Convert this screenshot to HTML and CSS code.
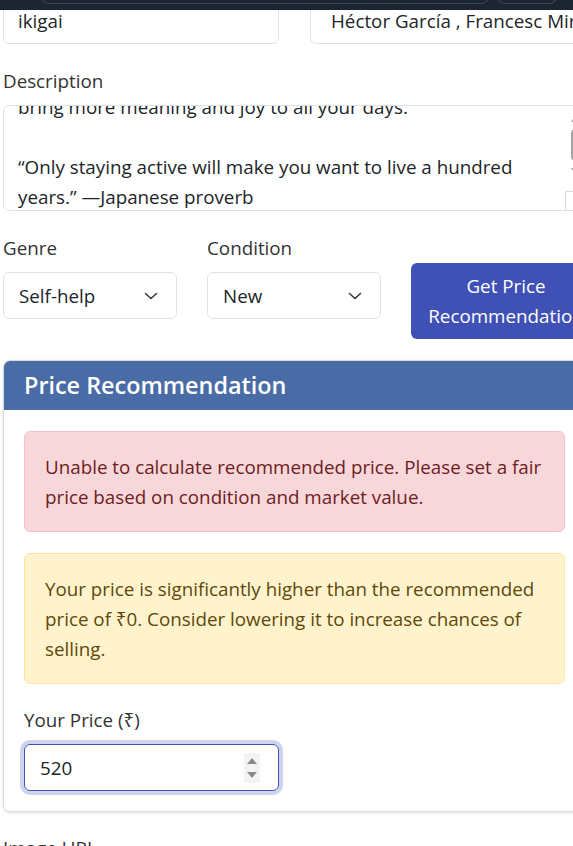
FILE: index.html
```html
<!DOCTYPE html>
<html lang="en">
<head>
<meta charset="utf-8">
<title>Sell Book</title>
<link rel="stylesheet" href="styles.css">
</head>
<body>
<header class="topbar">
  <div class="topbar-search"></div>
  <div class="topbar-btn"></div>
</header>
<main class="page">
  <div class="row-two">
    <div class="group">
      <div class="control">ikigai</div>
    </div>
    <div class="group">
      <div class="control control-wide">Héctor García , Francesc Miralles</div>
    </div>
  </div>

  <div class="group">
    <label class="label">Description</label>
    <div class="textarea">
      <div class="textarea-text">
        <p>bring more meaning and joy to all your days.</p>
        <p>&nbsp;</p>
        <p>“Only staying active will make you want to live a hundred years.” —Japanese proverb</p>
      </div>
      <div class="scrollbar">
        <svg class="sb-arrow" width="10" height="8" viewBox="0 0 10 8"><path d="M5 1 L9 7 L1 7 Z" fill="#a3a3a3"/></svg>
        <div class="sb-thumb"></div>
        <svg class="sb-arrow" width="10" height="8" viewBox="0 0 10 8"><path d="M1 1 L9 1 L5 7 Z" fill="#a3a3a3"/></svg>
        <div class="sb-corner"></div>
      </div>
    </div>
  </div>

  <div class="row-three">
    <div class="col">
      <label class="label">Genre</label>
      <div class="select">
        <span>Self-help</span>
        <svg width="14" height="8" viewBox="0 0 14 8"><path d="M1.5 1.5 L7 6.5 L12.5 1.5" fill="none" stroke="#343a40" stroke-width="1.6" stroke-linecap="round" stroke-linejoin="round"/></svg>
      </div>
    </div>
    <div class="col">
      <label class="label">Condition</label>
      <div class="select">
        <span>New</span>
        <svg width="14" height="8" viewBox="0 0 14 8"><path d="M1.5 1.5 L7 6.5 L12.5 1.5" fill="none" stroke="#343a40" stroke-width="1.6" stroke-linecap="round" stroke-linejoin="round"/></svg>
      </div>
    </div>
    <div class="col col-btn">
      <button class="btn-primary" type="button">Get Price Recommendation</button>
    </div>
  </div>

  <section class="card">
    <h2 class="card-header">Price Recommendation</h2>
    <div class="card-body">
      <div class="alert alert-danger">Unable to calculate recommended price. Please set a fair price based on condition and market value.</div>
      <div class="alert alert-warning">Your price is significantly higher than the recommended price of ₹0. Consider lowering it to increase chances of selling.</div>
      <label class="label">Your Price (₹)</label>
      <div class="number-input">
        <span>520</span>
        <svg class="spinner" width="16" height="30" viewBox="0 0 16 30"><rect width="16" height="30" fill="#f3f3f3"/><path d="M8 5 L13 11 L3 11 Z" fill="#8a8a8a"/><path d="M3 19 L13 19 L8 25 Z" fill="#8a8a8a"/></svg>
      </div>
    </div>
  </section>

  <div class="group">
    <label class="label">Image URL</label>
  </div>
</main>
</body>
</html>
```

FILE: styles.css
```css
* { box-sizing: border-box; }

html, body {
  margin: 0;
  padding: 0;
  background: #ffffff;
  overflow: hidden;
}

body {
  font-family: "Open Sans", "Noto Sans", sans-serif;
  font-size: 18.8px;
  line-height: 30px;
  color: #212529;
}

.topbar {
  position: fixed;
  top: 0;
  left: 0;
  right: 0;
  height: 10px;
  background: #1d2432;
  z-index: 10;
  display: flex;
  gap: 8px;
  padding-left: 41px;
}

.topbar-search {
  width: 448px;
  height: 8px;
  margin-top: -4px;
  border: 1px solid #3d4757;
  border-radius: 0 0 8px 8px;
}

.topbar-btn {
  width: 60px;
  height: 8px;
  margin-top: -4px;
  border: 1px solid #3d4757;
  border-radius: 0 0 8px 8px;
}

.page {
  width: 583px;
  margin-left: 3px;
  margin-top: -3px;
}

.row-two {
  display: grid;
  grid-template-columns: minmax(0, 1fr) minmax(0, 1fr);
  column-gap: 31px;
}

.group {
  margin-bottom: 22px;
}

.label {
  display: block;
  color: #333333;
  margin-bottom: 9px;
}

.control {
  height: 47px;
  border: 1px solid #dee2e6;
  border-radius: 6px;
  padding: 8px 14px;
  white-space: nowrap;
  overflow: hidden;
}

.control-wide {
  padding-left: 20px;
}

.textarea {
  position: relative;
  height: 106px;
  border: 1px solid #dee2e6;
  border-radius: 6px;
  overflow: hidden;
}

.textarea-text {
  margin-top: -14px;
  padding: 0 40px 0 14px;
}

.textarea-text p {
  margin: 0;
}

.scrollbar {
  position: absolute;
  top: 0;
  right: 0;
  width: 20px;
  height: 100%;
  display: flex;
  flex-direction: column;
  align-items: center;
  padding-top: 9px;
  background: #ffffff;
}

.sb-arrow { display: block; }

.sb-thumb {
  width: 9px;
  height: 32px;
  margin: 6px 0;
  border-radius: 5px;
  background: #a3a3a3;
}

.sb-corner {
  margin-top: auto;
  width: 20px;
  height: 19px;
  border-top: 1px solid #dcdcdc;
  border-left: 1px solid #dcdcdc;
  background: #ffffff;
}

.row-three {
  display: grid;
  grid-template-columns: 174px 174px 190px;
  column-gap: 30px;
  margin-bottom: 21px;
}

.select {
  height: 47px;
  border: 1px solid #dee2e6;
  border-radius: 6px;
  padding: 8px 18px 8px 15px;
  display: flex;
  align-items: center;
  justify-content: space-between;
}

.col-btn {
  padding-top: 30px;
}

.btn-primary {
  width: 190px;
  height: 76px;
  border: 0;
  border-radius: 6px;
  background: #3f51b5;
  color: #ffffff;
  font-family: inherit;
  font-size: 18.8px;
  line-height: 30px;
  padding: 8px 10px;
  text-align: center;
}

.card {
  border: 1px solid #dcdcdc;
  border-radius: 7px;
  box-shadow: 0 1px 3px rgba(0, 0, 0, 0.12);
  overflow: hidden;
  margin-bottom: 21px;
}

.card-header {
  margin: 0;
  height: 49px;
  background: #4a6ca6;
  color: #ffffff;
  font-size: 23.4px;
  font-weight: 600;
  line-height: 49px;
  padding: 0 20px;
}

.card-body {
  padding: 21px 20px 20px 20px;
}

.alert {
  border: 1px solid transparent;
  border-radius: 6px;
  padding: 20px 20px 19px 20px;
  margin-bottom: 21px;
}

.alert-danger {
  background: #f8d7da;
  border-color: #f5c2c7;
  color: #6d1c22;
}

.alert-warning {
  background: #fff3cd;
  border-color: #ffe69c;
  color: #5e4808;
}

.number-input {
  width: 255px;
  height: 47px;
  border: 1px solid #3f51b5;
  border-radius: 6px;
  box-shadow: 0 0 0 4px rgba(63, 81, 181, 0.25);
  padding: 8px 18px 8px 15px;
  display: flex;
  align-items: center;
  justify-content: space-between;
}

.spinner { display: block; }
```
